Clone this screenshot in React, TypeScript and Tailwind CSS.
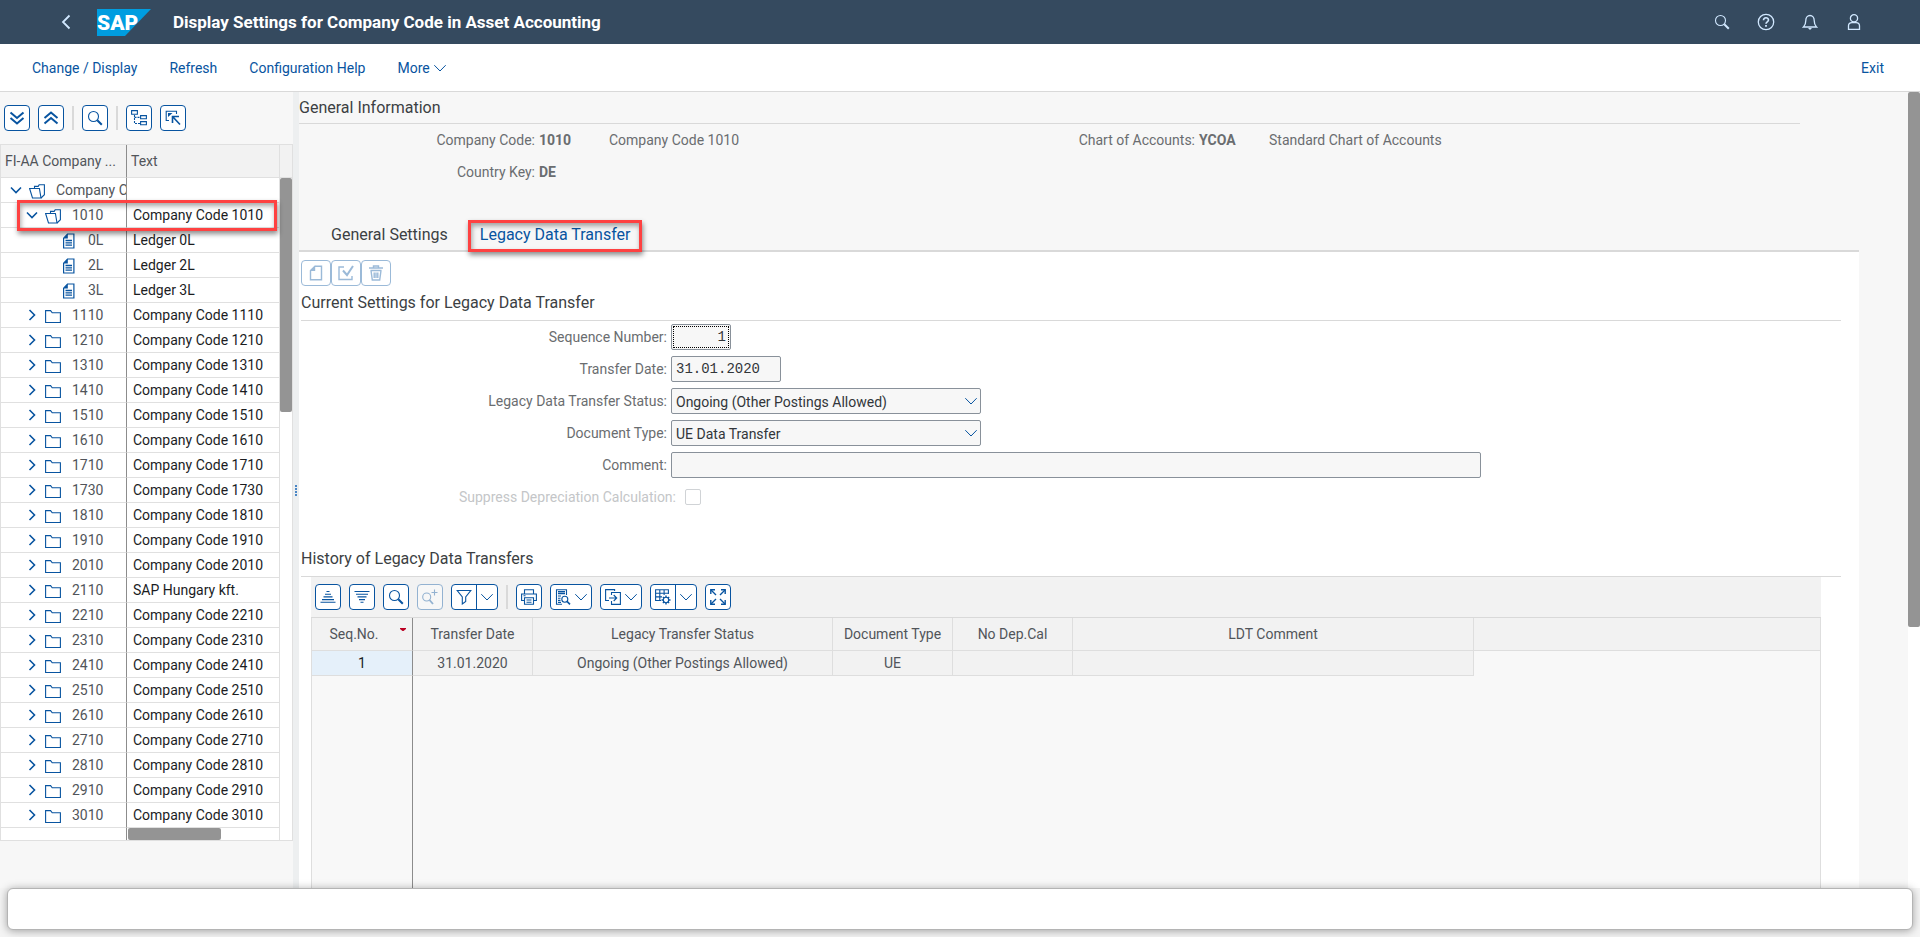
import type { ReactNode } from "react";
import { clsx } from "clsx";

const treeRows = [
  { level: 0, kind: "open", code: "Company Codes", text: "" },
  { level: 1, kind: "open", code: "1010", text: "Company Code 1010" },
  { level: 2, kind: "doc", code: "0L", text: "Ledger 0L" },
  { level: 2, kind: "doc", code: "2L", text: "Ledger 2L" },
  { level: 2, kind: "doc", code: "3L", text: "Ledger 3L" },
  ...[
    "1110", "1210", "1310", "1410", "1510", "1610", "1710", "1730", "1810", "1910", "2010",
    "2110", "2210", "2310", "2410", "2510", "2610", "2710", "2810", "2910", "3010",
  ].map((code) => ({
    level: 1,
    kind: "closed",
    code,
    text: code === "2110" ? "SAP Hungary kft." : `Company Code ${code}`,
  })),
];

const indent = ["pl-[7px]", "pl-[23px]", "pl-[39px]"];

function Icon({ size = 16, width = 1.1, children }: { size?: number; width?: number; children: ReactNode }) {
  return (
    <svg
      width={size}
      height={size}
      viewBox={`0 0 ${size} ${size}`}
      fill="none"
      stroke="currentColor"
      strokeWidth={width}
      className="shrink-0"
      aria-hidden="true"
    >
      {children}
    </svg>
  );
}

function ChevronIcon() {
  return (
    <Icon size={12} width={1}>
      <path d="M.3 3.200l5.700 5.800 5.700-5.800" />
    </Icon>
  );
}

function SearchIcon() {
  return (
    <Icon>
      <circle cx="6.500" cy="6.500" r="5" />
      <path d="M10.300 10.300l4.500 4.500" strokeWidth="2" />
    </Icon>
  );
}

function TreeIcon({ kind }: { kind: string }) {
  if (kind === "doc") {
    return (
      <Icon width={1.200}>
        <path d="M6.500 1h6.400v14H2.600V5.200z" />
        <path d="M2.300 5.500L6.800.7v4.800z" fill="currentColor" stroke="none" />
        <path d="M4.500 7.500h6.500M4.500 9.800h6.500M4.500 12.100h6.500" strokeWidth="1.300" />
      </Icon>
    );
  }
  if (kind === "open") {
    return (
      <Icon>
        <path d="M.6 5.500h9.800l1.600 9.500H3.500z" />
        <path d="M5.500 5.500V3.400h3.700l1-1.700h5.200v10l-3.400 3.300" />
      </Icon>
    );
  }
  return (
    <Icon>
      <path d="M.6 14.500V2.600h5l1.600 2.200h8.200v9.700z" />
    </Icon>
  );
}

function ToolButton({
  label,
  children,
  wide = false,
  disabled = false,
}: {
  label: string;
  children: ReactNode;
  wide?: boolean;
  disabled?: boolean;
}) {
  return (
    <button
      type="button"
      aria-label={label}
      disabled={disabled}
      className={clsx(
        "flex h-[26px] shrink-0 items-center justify-center gap-1 rounded border border-[#0854a0] bg-white text-[#0854a0]",
        wide ? "w-[42px]" : "w-[26px]",
        disabled && "opacity-40",
      )}
    >
      {children}
    </button>
  );
}

function SplitButton({ label, children }: { label: string; children: ReactNode }) {
  return (
    <div className="flex h-[26px] w-[47px] shrink-0 rounded border border-[#0854a0] bg-white text-[#0854a0]">
      <button type="button" aria-label={label} className="flex w-[25px] items-center justify-center border-r border-[#0854a0]">
        {children}
      </button>
      <button type="button" aria-label={`${label} options`} className="flex flex-1 items-center justify-center">
        <ChevronIcon />
      </button>
    </div>
  );
}

function Separator() {
  return <div className="h-6 w-0.5 shrink-0 bg-[#d9d9d9]" />;
}

function ShellHeader() {
  return (
    <header className="flex h-11 shrink-0 items-center bg-[#354a5f] pr-11 pl-[58px] text-[#d1e8ff]">
      <button type="button" aria-label="Back" className="mr-[23px]">
        <Icon width={1.800}>
          <path d="M11.500 1.500L5 8l6.500 6.500" />
        </Icon>
      </button>
      <svg width="54" height="27" viewBox="0 0 54 27" className="mr-[22px]" role="img" aria-label="SAP">
        <path d="M0 0h54L28 27H0z" fill="#009de0" />
        <text x="0" y="21" fill="#fff" fontFamily="Roboto, sans-serif" fontSize="21" fontWeight="900">
          SAP
        </text>
      </svg>
      <h1 className="flex-1 text-[17px] font-bold text-white">Display Settings for Company Code in Asset Accounting</h1>
      <button type="button" aria-label="Search" className="flex w-11 justify-center">
        <SearchIcon />
      </button>
      <button type="button" aria-label="Help" className="flex w-11 justify-center">
        <Icon size={18} width={1.300}>
          <circle cx="9" cy="9" r="7.700" />
          <path d="M6.500 7.300c0-3.300 5-3.300 5-.3 0 1.800-2.500 1.900-2.500 3.700" strokeWidth="1.600" />
          <path d="M9 12v1.800" strokeWidth="1.800" />
        </Icon>
      </button>
      <button type="button" aria-label="Notifications" className="flex w-11 justify-center">
        <Icon width={1.300}>
          <path d="M1.500 13h13c-2-2-2.300-3.500-2.300-6.500 0-3-1.700-5-4.200-5s-4.200 2-4.200 5c0 3-.3 4.500-2.300 6.500z" />
          <path d="M6 14h4l-2 2z" fill="currentColor" stroke="none" />
        </Icon>
      </button>
      <button type="button" aria-label="User" className="flex w-11 justify-center">
        <Icon width={1.300}>
          <circle cx="8" cy="4.300" r="3.600" />
          <path d="M2.500 15.300v-3.500c0-2 1.500-3.200 3.500-3.200h4c2 0 3.500 1.200 3.500 3.200v3.500z" />
        </Icon>
      </button>
    </header>
  );
}

function ActionBar() {
  return (
    <nav className="flex h-12 shrink-0 items-center gap-8 border-b border-[#d9d9d9] bg-white px-8 text-[#0854a0]">
      <button type="button">Change / Display</button>
      <button type="button">Refresh</button>
      <button type="button">Configuration Help</button>
      <button type="button" className="flex items-center gap-1">
        More <ChevronIcon />
      </button>
      <button type="button" className="mr-1 ml-auto">Exit</button>
    </nav>
  );
}

function CompanyTree() {
  return (
    <aside className="w-[293px] shrink-0">
      <div className="flex h-[52px] items-center gap-2 pl-1">
        <ToolButton label="Expand all">
          <Icon width={2}>
            <path d="M1.500 2.500L8 8l6.500-5.500M1.500 8L8 13.500 14.500 8" />
          </Icon>
        </ToolButton>
        <ToolButton label="Collapse all">
          <Icon width={2}>
            <path d="M1.500 8L8 2.500 14.500 8M1.500 13.500L8 8l6.500 5.500" />
          </Icon>
        </ToolButton>
        <Separator />
        <ToolButton label="Find">
          <SearchIcon />
        </ToolButton>
        <Separator />
        <ToolButton label="Show hierarchy">
          <Icon>
            <path d="M.6.600h5.800v3.600H.6zM9.600 5.600h5.800v3.200H9.600zM9.600 11.600h5.800v3.200H9.600z" />
            <path d="M3.500 5v8.500h6M3.500 7.400h6" strokeDasharray="2 1" />
          </Icon>
        </ToolButton>
        <ToolButton label="Set focus">
          <Icon>
            <path d="M4 10.500H1.200V1.200h10.300V4" />
            <path d="M3 3h4.500L3 7z" fill="currentColor" stroke="none" />
            <path d="M7.500 13V6.500H14M8 7l7 7.500" strokeWidth="1.600" />
          </Icon>
        </ToolButton>
      </div>

      <div className="relative border border-[#e0e0e0] bg-white">
        <div className="flex">
          <div className="min-w-0 flex-1">
            <table className="w-full table-fixed border-separate border-spacing-0 text-left">
              <colgroup>
                <col className="w-[126px]" />
                <col />
              </colgroup>
              <thead className="bg-[#f2f2f2] text-[#51555a]">
                <tr className="h-[33px]">
                  <th className="border-r border-b border-r-[#8c8c8c] border-b-[#e0e0e0] py-0 pr-0 pl-1 font-normal whitespace-nowrap">
                    FI-AA Company ...
                  </th>
                  <th className="border-r border-b border-[#e0e0e0] py-0 pl-1 font-normal">Text</th>
                </tr>
              </thead>
              <tbody>
                {treeRows.map((row) => (
                  <tr key={row.code} className="h-[25px]">
                    <td className="overflow-hidden border-r border-b border-r-[#8c8c8c] border-b-[#e0e0e0] p-0">
                      <div className={clsx("flex items-center whitespace-nowrap text-[#51555a]", indent[row.level])}>
                        <span className="mr-[5px] flex w-4 shrink-0 justify-center text-[#0854a0]">
                          {row.kind === "open" && (
                            <Icon size={12} width={1.600}>
                              <path d="M1 3.500L6 8.500l5-5" />
                            </Icon>
                          )}
                          {row.kind === "closed" && (
                            <Icon size={12} width={1.600}>
                              <path d="M3.500 1L8.500 6l-5 5" />
                            </Icon>
                          )}
                        </span>
                        <span className="mr-[11px] pt-0.5 text-[#0854a0]">
                          <TreeIcon kind={row.kind} />
                        </span>
                        {row.code}
                      </div>
                    </td>
                    <td className="border-r border-b border-[#e0e0e0] py-0 pr-0 pl-1.5 whitespace-nowrap text-[#1b1d1f]">
                      {row.text}
                    </td>
                  </tr>
                ))}
              </tbody>
            </table>
          </div>
          <div className="flex w-3 flex-col">
            <div className="h-[33px] border-b border-[#e0e0e0] bg-[#f2f2f2]" />
            <div className="h-[234px] rounded-xs bg-[#949494]" />
          </div>
        </div>
        <div className="flex h-3">
          <div className="w-[126px] border-r border-[#8c8c8c]" />
          <div className="flex-1 border-r border-[#e0e0e0] pl-px">
            <div className="h-3 w-[93px] rounded-xs bg-[#949494]" />
          </div>
          <div className="w-3" />
        </div>
        <div className="pointer-events-none absolute top-[55px] right-[15px] left-4 h-[31px] border-3 border-[#fe4141] shadow-[1px_3px_5px_rgba(0,0,0,0.45),inset_1px_3px_5px_rgba(0,0,0,0.35)]" />
      </div>
    </aside>
  );
}

function GeneralInformation() {
  return (
    <section className="text-[#6a6d70]">
      <h2 className="mr-[108px] flex h-8 items-center border-b border-[#d9d9d9] text-base text-[#3c3f43]">
        General Information
      </h2>
      <dl className="grid grid-cols-[236px_66px_200px_382px_66px_1fr] gap-x-1 leading-8 whitespace-nowrap">
        <dt className="text-right">Company Code:</dt>
        <dd className="font-bold">1010</dd>
        <dd>Company Code 1010</dd>
        <dt className="text-right">Chart of Accounts:</dt>
        <dd className="font-bold">YCOA</dd>
        <dd>Standard Chart of Accounts</dd>
        <dt className="text-right">Country Key:</dt>
        <dd className="font-bold">DE</dd>
      </dl>
    </section>
  );
}

function Tabs() {
  return (
    <div role="tablist" className="mt-8 mr-[49px] flex gap-2 border-b-2 border-[#d9d9d9] pl-5 text-base text-[#3c3f43]">
      <button type="button" role="tab" aria-selected="false" className="h-[30px] px-3">
        General Settings
      </button>
      <button type="button" role="tab" aria-selected="true" className="relative h-[30px] px-3 text-[#0854a0]">
        Legacy Data Transfer
        <span className="pointer-events-none absolute inset-x-0 top-0 -bottom-0.5 border-3 border-[#fe4141] shadow-[1px_3px_5px_rgba(0,0,0,0.45),inset_1px_3px_5px_rgba(0,0,0,0.35)]" />
      </button>
    </div>
  );
}

function SectionTitle({ children }: { children: ReactNode }) {
  return (
    <h2 className="mr-[18px] flex h-[35px] shrink-0 items-center border-b border-[#d9d9d9] text-base text-[#3c3f43]">
      {children}
    </h2>
  );
}

const fieldClass = "block h-[26px] rounded-xs border border-[#89919a] bg-[#f7f7f7] px-1 text-[#32363a]";

function SelectField({ id, value }: { id: string; value: string }) {
  return (
    <div className="relative w-[310px]">
      <select id={id} defaultValue={value} className={clsx(fieldClass, "w-full appearance-none")}>
        <option>{value}</option>
      </select>
      <span className="pointer-events-none absolute inset-y-0 right-1 flex items-center text-[#0854a0]">
        <ChevronIcon />
      </span>
    </div>
  );
}

function TransferForm() {
  return (
    <form className="pt-[3px] text-[#6a6d70]">
      <div className="grid grid-cols-[366px_1fr] gap-x-1 gap-y-1.5 leading-[26px]">
        <label htmlFor="seq" className="text-right">Sequence Number:</label>
        <input
          id="seq"
          readOnly
          defaultValue="1"
          className={clsx(
            fieldClass,
            "w-[60px] text-right font-['Liberation_Mono',monospace] outline-1 -outline-offset-3 outline-black outline-dotted",
          )}
        />
        <label htmlFor="date" className="text-right">Transfer Date:</label>
        <input
          id="date"
          readOnly
          defaultValue="31.01.2020"
          className={clsx(fieldClass, "w-[110px] font-['Liberation_Mono',monospace]")}
        />
        <label htmlFor="status" className="text-right">Legacy Data Transfer Status:</label>
        <SelectField id="status" value="Ongoing (Other Postings Allowed)" />
        <label htmlFor="doctype" className="text-right">Document Type:</label>
        <SelectField id="doctype" value="UE Data Transfer" />
        <label htmlFor="comment" className="text-right">Comment:</label>
        <input id="comment" readOnly className={clsx(fieldClass, "mr-[378px]")} />
      </div>
      <div className="mt-1.5 flex h-[26px] items-center gap-[9px] text-[#c4c6c8]">
        <label htmlFor="suppress" className="w-[375px] text-right">Suppress Depreciation Calculation:</label>
        <input id="suppress" type="checkbox" disabled className="size-4 appearance-none rounded-xs border border-[#d0d3d6] bg-white" />
      </div>
    </form>
  );
}

function HistoryToolbar() {
  return (
    <div className="flex h-10 shrink-0 items-center gap-2 bg-[#f2f2f2] pl-1">
      <ToolButton label="Sort ascending">
        <Icon>
          <path d="M6.500 2.500h3M5 5.200h6M3.500 7.900h9M2 10.600h12M.5 13.300h15" />
        </Icon>
      </ToolButton>
      <ToolButton label="Sort descending">
        <Icon>
          <path d="M.5 2.500h15M2 5.200h12M3.500 7.900h9M5 10.600h6M6.500 13.300h3" />
        </Icon>
      </ToolButton>
      <ToolButton label="Find">
        <SearchIcon />
      </ToolButton>
      <ToolButton label="Find next" disabled>
        <Icon>
          <circle cx="4.700" cy="8" r="4" />
          <path d="M7.500 11l3.500 4" strokeWidth="1.800" />
          <path d="M12.500.5v6M9.500 3.500h6" />
        </Icon>
      </ToolButton>
      <SplitButton label="Filter">
        <Icon>
          <path d="M1.200 1.500h13.600L9.700 8v4.500L6.300 15V8z" />
        </Icon>
      </SplitButton>
      <Separator />
      <ToolButton label="Print">
        <Icon>
          <path d="M3.500 5V.800h9V5M3.500 11.500H.600V5h14.800v6.500h-2.900" />
          <path d="M3.500 8.800h9v6.500h-9zM5.500 11h5M5.500 13.200h5M2.500 6.800h2" />
        </Icon>
      </ToolButton>
      <ToolButton label="Views" wide>
        <Icon>
          <path d="M7 15.200H1.500V.8h10V6" />
          <path d="M3 2.800h7M3 4.600h7" strokeWidth="1.400" />
          <path d="M3 7h3M3 9.200h2.500M3 11.400h2.500M3 13.400h3" />
          <circle cx="9.800" cy="10.200" r="3" />
          <path d="M12 12.400l3 3" strokeWidth="1.600" />
        </Icon>
        <ChevronIcon />
      </ToolButton>
      <ToolButton label="Export" wide>
        <Icon>
          <path d="M4 11.500H.600V.600h9V2" />
          <path d="M6.500 6V3.500h8.900v11.900H6.500V12" />
          <path d="M4 9h7.500M8.700 6l3 3-3 3" />
        </Icon>
        <ChevronIcon />
      </ToolButton>
      <SplitButton label="Layout">
        <Icon>
          <path d="M6 11.500H.600V.800h12.800V5M.600 4.300h12.800M.600 7.900H7M4.800.800v10.700M9.100.800V6" />
          <circle cx="11" cy="11" r="2.700" />
          <path d="M11 6.500v2M11 13.500v2M6.500 11h2M13.500 11h2M7.900 7.900l1.300 1.300M12.800 12.800l1.300 1.300M14.100 7.900l-1.300 1.300M9.200 12.800l-1.300 1.300" strokeWidth="1.400" />
        </Icon>
      </SplitButton>
      <ToolButton label="Full screen">
        <Icon width={1.400}>
          <path d="M.8 5V.800H5M11 .800h4.200V5M15.200 11v4.200H11M5 15.200H.8V11" />
          <path d="M1 1l5 5M15 1l-5 5M15 15l-5-5M1 15l5-5" />
        </Icon>
      </ToolButton>
    </div>
  );
}

function HistoryTable() {
  const cell = "border-r border-b border-[#dedede] p-0 font-normal whitespace-nowrap";
  return (
    <div className="mr-[38px] ml-2.5 flex min-h-0 flex-1 flex-col">
      <HistoryToolbar />
      <table className="w-full shrink-0 table-fixed border-separate border-spacing-0 border-t border-[#d9d9d9] bg-[#f2f2f2] text-center text-[#51555a]">
        <colgroup>
          <col className="w-[102px]" />
          <col className="w-[120px]" />
          <col className="w-[300px]" />
          <col className="w-[120px]" />
          <col className="w-[120px]" />
          <col className="w-[401px]" />
          <col />
        </colgroup>
        <thead>
          <tr className="h-[33px]">
            <th className={clsx(cell, "relative border-l border-r-[#8c8c8c] pr-4")}>
              Seq.No.
              <svg width="6" height="3" viewBox="0 0 6 3" className="absolute top-2.5 right-1.5" aria-hidden="true">
                <path d="M0 0h6v1L3.500 3h-1L0 1z" fill="#bb0022" />
              </svg>
            </th>
            <th className={cell}>Transfer Date</th>
            <th className={cell}>Legacy Transfer Status</th>
            <th className={cell}>Document Type</th>
            <th className={cell}>No Dep.Cal</th>
            <th className={cell}>LDT Comment</th>
            <th className={cell} />
          </tr>
        </thead>
        <tbody>
          <tr className="h-[25px]">
            <td className={clsx(cell, "border-l border-r-[#8c8c8c] bg-[#e5f0fa] text-[#1b1d1f]")}>1</td>
            <td className={cell}>31.01.2020</td>
            <td className={cell}>Ongoing (Other Postings Allowed)</td>
            <td className={cell}>UE</td>
            <td className={cell} />
            <td className={cell} />
            <td className="border-r border-[#dedede] bg-[#f8f8f8]" />
          </tr>
        </tbody>
      </table>
      <div className="flex flex-1 border-x border-[#dedede] bg-[#f8f8f8]">
        <div className="w-[101px] border-r border-[#8c8c8c]" />
      </div>
    </div>
  );
}

const rowButtonClass = "flex h-[26px] w-[30px] items-center justify-center rounded border border-[#0854a0]";

export default function App() {
  return (
    <div className="flex h-screen flex-col overflow-hidden bg-[#f7f7f7] font-[Roboto,sans-serif] text-sm">
      <ShellHeader />
      <ActionBar />
      <div className="flex min-h-0 flex-1">
        <CompanyTree />
        <div className="flex w-1.5 shrink-0 flex-col items-center justify-center gap-px bg-[#edeff0]">
          <span className="size-0.5 bg-[#4a86c5]" />
          <span className="size-0.5 bg-[#4a86c5]" />
          <span className="size-0.5 bg-[#4a86c5]" />
          <span className="size-0.5 bg-[#4a86c5]" />
        </div>
        <main className="flex min-w-0 flex-1 flex-col">
          <GeneralInformation />
          <Tabs />
          <div className="mr-[49px] flex min-h-0 flex-1 flex-col bg-white pt-2 pl-0.5">
            <div className="flex text-[#0854a0] opacity-40">
              <button type="button" disabled aria-label="Create" className={rowButtonClass}>
                <Icon width={1.400}>
                  <path d="M7 1.200h6.500v13.600h-11V5.500z" />
                  <path d="M2 6l5.200-5.500V6z" fill="currentColor" stroke="none" />
                </Icon>
              </button>
              <button type="button" disabled aria-label="Select" className={rowButtonClass}>
                <Icon width={1.400}>
                  <path d="M6 2H1v12.500h13V11" />
                  <path d="M5 5.500l4 4.500 6-9" strokeWidth="2" />
                </Icon>
              </button>
              <button type="button" disabled aria-label="Delete" className={rowButtonClass}>
                <Icon width={1.400}>
                  <path d="M1 3h14M5.500 3V1h5v2M2.500 5.500h11M3 5.500l1.300 9.500h7.400L13 5.500M6.200 7.500V13M8 7.500V13M9.800 7.500V13" />
                </Icon>
              </button>
            </div>
            <SectionTitle>Current Settings for Legacy Data Transfer</SectionTitle>
            <TransferForm />
            <div className="h-8 shrink-0" />
            <SectionTitle>History of Legacy Data Transfers</SectionTitle>
            <HistoryTable />
          </div>
        </main>
        <div className="w-3 shrink-0 bg-white">
          <div className="h-[535px] rounded-xs bg-[#949494]" />
        </div>
      </div>
      <footer className="z-10 shrink-0 bg-[#f4f4f4] px-[7px] pb-[7px]">
        <div className="h-[42px] rounded-md border border-[#b4b4b4] bg-white shadow-[0_1px_8px_rgba(0,0,0,0.35)]" />
      </footer>
    </div>
  );
}
